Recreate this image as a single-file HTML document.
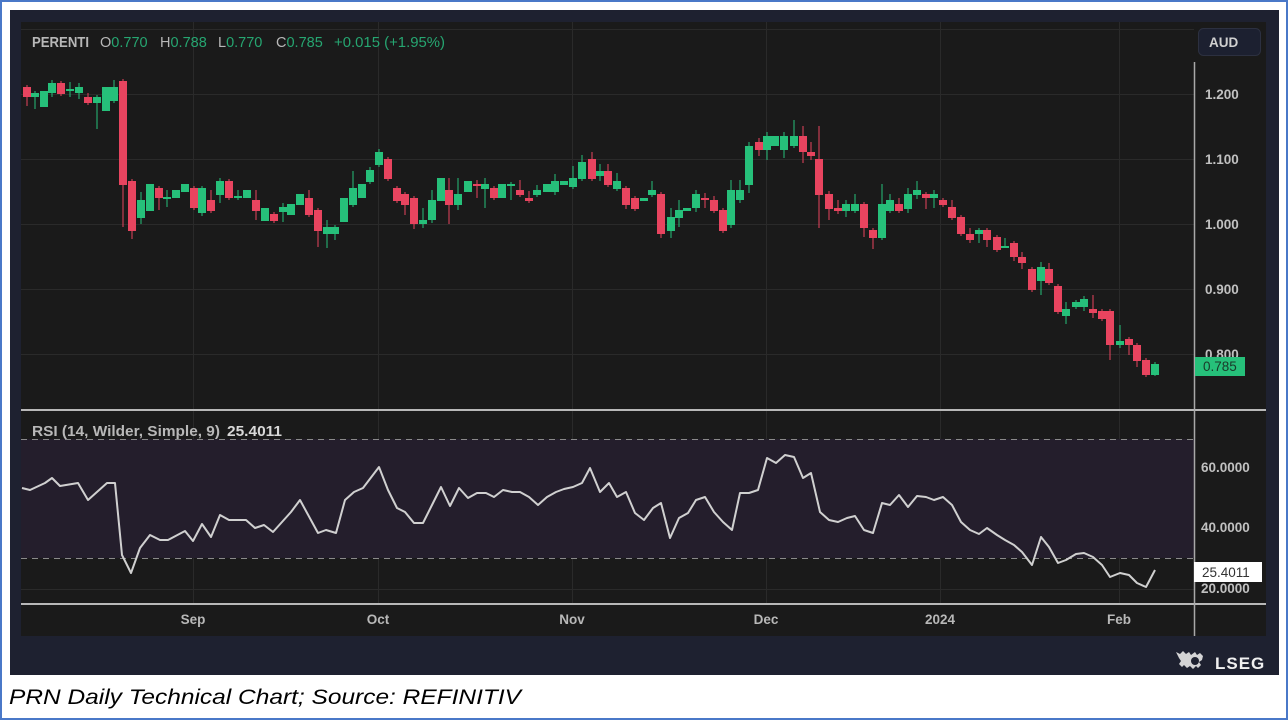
<!DOCTYPE html>
<html><head><meta charset="utf-8"><style>
html,body{margin:0;padding:0;background:#fff;width:1288px;height:720px;overflow:hidden}
svg{display:block}
text{font-family:"Liberation Sans",sans-serif}
</style></head><body>
<svg width="1288" height="720" viewBox="0 0 1288 720" xmlns="http://www.w3.org/2000/svg">
<rect x="0" y="0" width="1288" height="720" fill="#fff"/>
<rect x="1" y="1" width="1286" height="718" fill="none" stroke="#4a78c8" stroke-width="2"/>
<rect x="10" y="10" width="1269" height="665" fill="#1e2130"/>
<rect x="21" y="22" width="1245" height="614" fill="#1a1a1a"/>
<g stroke="#2a2a2a" stroke-width="1">
<line x1="21" y1="29.5" x2="1194" y2="29.5"/>
<line x1="21" y1="94.5" x2="1194" y2="94.5"/><line x1="21" y1="159.5" x2="1194" y2="159.5"/>
<line x1="21" y1="224.5" x2="1194" y2="224.5"/><line x1="21" y1="289.5" x2="1194" y2="289.5"/>
<line x1="21" y1="354.5" x2="1194" y2="354.5"/>
<line x1="21" y1="467.5" x2="1194" y2="467.5"/><line x1="21" y1="527.5" x2="1194" y2="527.5"/><line x1="21" y1="589.5" x2="1194" y2="589.5"/>
<line x1="193.5" y1="22" x2="193.5" y2="603"/><line x1="378.5" y1="22" x2="378.5" y2="603"/>
<line x1="572.5" y1="22" x2="572.5" y2="603"/><line x1="766.5" y1="22" x2="766.5" y2="603"/>
<line x1="940.5" y1="22" x2="940.5" y2="603"/><line x1="1119.5" y1="22" x2="1119.5" y2="603"/>
</g>
<rect x="21" y="439" width="1173" height="119" fill="#241e2c"/>
<g stroke="#8a8a8a" stroke-dasharray="6,5" stroke-width="1">
<line x1="21" y1="439.5" x2="1194" y2="439.5"/><line x1="21" y1="558.5" x2="1194" y2="558.5"/>
</g>
<g stroke="#b8b8b8" stroke-width="2">
<line x1="21" y1="410" x2="1266" y2="410"/>
<line x1="21" y1="604" x2="1266" y2="604"/>
</g>
<line x1="1194.5" y1="62" x2="1194.5" y2="636" stroke="#a8a8a8" stroke-width="1.5"/>
<g font-size="14.5">
<text x="32" y="47" fill="#b8b8b8" font-weight="bold" textLength="57" lengthAdjust="spacingAndGlyphs">PERENTI</text>
<text x="100" y="47" fill="#b8b8b8">O<tspan fill="#26a671">0.770</tspan></text>
<text x="160" y="47" fill="#b8b8b8">H<tspan fill="#26a671">0.788</tspan></text>
<text x="218" y="47" fill="#b8b8b8">L<tspan fill="#26a671">0.770</tspan></text>
<text x="276" y="47" fill="#b8b8b8">C<tspan fill="#26a671">0.785</tspan></text>
<text x="334" y="47" fill="#26a671" textLength="111" lengthAdjust="spacingAndGlyphs">+0.015 (+1.95%)</text>
</g>
<rect x="1198.5" y="28.5" width="62" height="27" rx="5" fill="#1c2030" stroke="#2c3040"/>
<text x="1209" y="47" font-size="13.5" font-weight="bold" fill="#d0d0d0">AUD</text>
<g font-size="13.5" fill="#c0c0c0" font-weight="bold">
<text x="1205" y="99">1.200</text><text x="1205" y="164">1.100</text>
<text x="1205" y="229">1.000</text><text x="1205" y="294">0.900</text><text x="1205" y="359">0.800</text>
<text x="1201" y="472">60.0000</text><text x="1201" y="532">40.0000</text><text x="1201" y="593">20.0000</text>
</g>
<rect x="1195" y="357" width="50" height="19" fill="#26c07a"/>
<text x="1203" y="371" font-size="13.5" fill="#1a3a2a">0.785</text>
<rect x="1194" y="562" width="68" height="20" fill="#fff"/>
<text x="1202" y="577" font-size="13.5" fill="#333">25.4011</text>
<text x="32" y="436" font-size="14.5" fill="#b8b8b8" font-weight="bold" textLength="188" lengthAdjust="spacingAndGlyphs">RSI (14, Wilder, Simple, 9)</text>
<text x="227" y="436" font-size="14.5" font-weight="bold" fill="#d8d8d8" textLength="55" lengthAdjust="spacingAndGlyphs">25.4011</text>
<g font-size="13.5" fill="#b8b8b8" font-weight="bold" text-anchor="middle">
<text x="193" y="624">Sep</text><text x="378" y="624">Oct</text><text x="572" y="624">Nov</text>
<text x="766" y="624">Dec</text><text x="940" y="624">2024</text><text x="1119" y="624">Feb</text>
</g>
<polyline fill="none" stroke="#d0d0d0" stroke-width="2" stroke-linejoin="round" points="22,488 30,490 45,483 52,478 60,486 78,483 88,500 107,483 115,483 122,555 131,573 140,548 150,535 160,540 168,540 185,531 193,541 202,524 211,537 220,515 229,520 246,520 255,528 264,525 273,532 282,522 291,512 300,500 318,533 326,530 336,533 345,500 354,492 363,488 379,467 388,490 397,508 405,512 414,523 423,523 432,505 441,487 450,506 459,488 468,498 477,493 486,493 494,497 503,490 512,492 520,492 529,497 538,505 547,497 556,492 564,489 573,487 582,483 590,468 600,492 609,483 617,497 626,492 635,513 644,520 653,508 661,503 670,538 679,518 688,513 696,500 705,497 714,512 723,522 732,530 740,493 749,493 758,490 767,458 776,463 785,455 794,457 803,478 811,473 820,512 829,520 838,522 847,518 855,516 864,530 873,533 882,503 890,505 899,495 908,507 917,496 926,497 934,500 943,497 952,505 961,522 970,530 979,534 987,528 997,535 1005,540 1014,545 1022,552 1032,565 1041,537 1049,547 1058,563 1066,560 1076,554 1084,553 1093,557 1102,565 1110,577 1120,573 1129,575 1137,583 1146,587 1155,570"/>
<g fill="#26c07a" stroke="#26c07a">
<g stroke-width="1">
<line x1="35" y1="91" x2="35" y2="109"/><line x1="52" y1="80" x2="52" y2="97"/><line x1="70" y1="82" x2="70" y2="97"/><line x1="79" y1="83" x2="79" y2="99"/><line x1="97" y1="95" x2="97" y2="129"/><line x1="114" y1="80" x2="114" y2="103"/>
<line x1="141" y1="192" x2="141" y2="224"/><line x1="167" y1="190" x2="167" y2="207"/><line x1="202" y1="186" x2="202" y2="216"/><line x1="220" y1="178" x2="220" y2="203"/><line x1="238" y1="190" x2="238" y2="200"/><line x1="283" y1="203" x2="283" y2="222"/><line x1="327" y1="220" x2="327" y2="248"/><line x1="335" y1="225" x2="335" y2="240"/><line x1="353" y1="171" x2="353" y2="207"/><line x1="370" y1="167" x2="370" y2="184"/><line x1="379" y1="149" x2="379" y2="167"/>
<line x1="423" y1="208" x2="423" y2="228"/><line x1="432" y1="190" x2="432" y2="223"/><line x1="458" y1="178" x2="458" y2="210"/><line x1="485" y1="178" x2="485" y2="208"/><line x1="511" y1="182" x2="511" y2="200"/><line x1="537" y1="185" x2="537" y2="197"/><line x1="555" y1="174" x2="555" y2="195"/><line x1="573" y1="166" x2="573" y2="189"/><line x1="582" y1="155" x2="582" y2="181"/><line x1="600" y1="164" x2="600" y2="181"/><line x1="617" y1="173" x2="617" y2="191"/><line x1="652" y1="181" x2="652" y2="197"/><line x1="671" y1="208" x2="671" y2="238"/><line x1="679" y1="200" x2="679" y2="227"/><line x1="696" y1="190" x2="696" y2="212"/><line x1="731" y1="180" x2="731" y2="228"/><line x1="740" y1="180" x2="740" y2="203"/><line x1="749" y1="142" x2="749" y2="193"/><line x1="767" y1="132" x2="767" y2="160"/><line x1="784" y1="132" x2="784" y2="158"/><line x1="794" y1="120" x2="794" y2="148"/>
<line x1="846" y1="200" x2="846" y2="217"/><line x1="855" y1="194" x2="855" y2="213"/><line x1="882" y1="184" x2="882" y2="240"/><line x1="890" y1="194" x2="890" y2="213"/><line x1="908" y1="188" x2="908" y2="213"/><line x1="917" y1="181" x2="917" y2="199"/><line x1="934" y1="190" x2="934" y2="208"/><line x1="979" y1="228" x2="979" y2="243"/><line x1="1005" y1="238" x2="1005" y2="248"/><line x1="1041" y1="262" x2="1041" y2="295"/><line x1="1066" y1="302" x2="1066" y2="324"/><line x1="1076" y1="300" x2="1076" y2="309"/><line x1="1084" y1="296" x2="1084" y2="311"/><line x1="1120" y1="325" x2="1120" y2="348"/><line x1="1155" y1="362" x2="1155" y2="376"/>
</g>
<g stroke="none">
<rect x="31" y="93" width="8" height="4"/><rect x="40" y="91" width="8" height="16"/><rect x="48" y="83" width="8" height="10"/><rect x="66" y="89" width="8" height="2"/><rect x="75" y="87" width="8" height="6"/><rect x="93" y="97" width="8" height="6"/><rect x="102" y="87" width="8" height="24"/><rect x="110" y="87" width="8" height="14"/>
<rect x="137" y="200" width="8" height="18"/><rect x="146" y="184" width="8" height="27"/><rect x="163" y="197" width="8" height="2"/><rect x="172" y="190" width="8" height="8"/><rect x="181" y="184" width="8" height="8"/><rect x="198" y="188" width="8" height="25"/><rect x="216" y="181" width="8" height="14"/><rect x="234" y="196" width="8" height="2"/><rect x="243" y="190" width="8" height="8"/><rect x="261" y="208" width="8" height="13"/><rect x="279" y="207" width="8" height="5"/><rect x="287" y="204" width="8" height="11"/><rect x="296" y="194" width="8" height="11"/><rect x="323" y="227" width="8" height="7"/><rect x="331" y="227" width="8" height="7"/><rect x="340" y="198" width="8" height="24"/><rect x="349" y="188" width="8" height="17"/><rect x="358" y="184" width="8" height="14"/><rect x="366" y="170" width="8" height="12"/><rect x="375" y="152" width="8" height="13"/>
<rect x="419" y="220" width="8" height="4"/><rect x="428" y="200" width="8" height="20"/><rect x="437" y="178" width="8" height="23"/><rect x="454" y="194" width="8" height="11"/><rect x="464" y="181" width="8" height="11"/><rect x="481" y="184" width="8" height="5"/><rect x="498" y="184" width="8" height="14"/><rect x="507" y="184" width="8" height="2"/><rect x="533" y="190" width="8" height="5"/><rect x="543" y="184" width="8" height="8"/><rect x="551" y="181" width="8" height="11"/><rect x="560" y="181" width="8" height="4"/><rect x="569" y="178" width="8" height="9"/><rect x="578" y="162" width="8" height="17"/><rect x="596" y="171" width="8" height="5"/><rect x="613" y="181" width="8" height="8"/><rect x="640" y="198" width="8" height="3"/><rect x="648" y="190" width="8" height="5"/><rect x="667" y="217" width="8" height="14"/><rect x="675" y="210" width="8" height="8"/><rect x="683" y="208" width="8" height="3"/><rect x="692" y="194" width="8" height="14"/><rect x="727" y="190" width="8" height="35"/><rect x="736" y="190" width="8" height="10"/><rect x="745" y="146" width="8" height="39"/><rect x="763" y="136" width="8" height="14"/><rect x="771" y="136" width="8" height="10"/><rect x="780" y="136" width="8" height="14"/><rect x="790" y="136" width="8" height="10"/>
<rect x="842" y="204" width="8" height="7"/><rect x="851" y="204" width="8" height="7"/><rect x="878" y="204" width="8" height="34"/><rect x="886" y="200" width="8" height="11"/><rect x="904" y="194" width="8" height="15"/><rect x="913" y="190" width="8" height="5"/><rect x="930" y="194" width="8" height="4"/><rect x="975" y="230" width="8" height="4"/><rect x="1001" y="246" width="8" height="2"/><rect x="1037" y="267" width="8" height="14"/><rect x="1062" y="309" width="8" height="7"/><rect x="1072" y="302" width="8" height="5"/><rect x="1080" y="299" width="8" height="8"/><rect x="1116" y="341" width="8" height="4"/><rect x="1151" y="364" width="8" height="11"/>
</g></g>
<g fill="#e8445f" stroke="#e8445f">
<g stroke-width="1">
<line x1="27" y1="85" x2="27" y2="106"/><line x1="61" y1="81" x2="61" y2="96"/><line x1="88" y1="93" x2="88" y2="105"/><line x1="123" y1="79" x2="123" y2="227"/><line x1="132" y1="179" x2="132" y2="239"/><line x1="159" y1="186" x2="159" y2="210"/><line x1="194" y1="186" x2="194" y2="210"/><line x1="211" y1="190" x2="211" y2="213"/><line x1="229" y1="179" x2="229" y2="200"/><line x1="256" y1="190" x2="256" y2="220"/><line x1="274" y1="212" x2="274" y2="223"/><line x1="309" y1="190" x2="309" y2="217"/><line x1="318" y1="208" x2="318" y2="247"/><line x1="388" y1="157" x2="388" y2="181"/><line x1="397" y1="186" x2="397" y2="203"/><line x1="405" y1="192" x2="405" y2="215"/><line x1="414" y1="196" x2="414" y2="229"/>
<line x1="449" y1="178" x2="449" y2="224"/><line x1="477" y1="180" x2="477" y2="198"/><line x1="494" y1="186" x2="494" y2="200"/><line x1="520" y1="180" x2="520" y2="197"/><line x1="529" y1="191" x2="529" y2="203"/><line x1="592" y1="152" x2="592" y2="181"/><line x1="608" y1="164" x2="608" y2="187"/><line x1="626" y1="186" x2="626" y2="209"/><line x1="635" y1="196" x2="635" y2="211"/><line x1="661" y1="192" x2="661" y2="238"/><line x1="705" y1="193" x2="705" y2="208"/><line x1="714" y1="196" x2="714" y2="213"/><line x1="723" y1="208" x2="723" y2="233"/><line x1="759" y1="138" x2="759" y2="156"/>
<line x1="803" y1="126" x2="803" y2="163"/><line x1="811" y1="142" x2="811" y2="160"/><line x1="819" y1="126" x2="819" y2="228"/><line x1="829" y1="191" x2="829" y2="220"/><line x1="838" y1="200" x2="838" y2="214"/><line x1="864" y1="202" x2="864" y2="237"/><line x1="873" y1="228" x2="873" y2="249"/><line x1="899" y1="198" x2="899" y2="213"/><line x1="926" y1="192" x2="926" y2="209"/><line x1="943" y1="198" x2="943" y2="207"/><line x1="952" y1="200" x2="952" y2="220"/><line x1="961" y1="215" x2="961" y2="236"/><line x1="970" y1="228" x2="970" y2="243"/><line x1="987" y1="228" x2="987" y2="247"/><line x1="997" y1="235" x2="997" y2="252"/><line x1="1014" y1="241" x2="1014" y2="261"/><line x1="1022" y1="252" x2="1022" y2="269"/><line x1="1032" y1="267" x2="1032" y2="292"/><line x1="1049" y1="263" x2="1049" y2="285"/><line x1="1058" y1="284" x2="1058" y2="314"/><line x1="1093" y1="295" x2="1093" y2="318"/><line x1="1102" y1="309" x2="1102" y2="321"/><line x1="1110" y1="309" x2="1110" y2="360"/><line x1="1129" y1="337" x2="1129" y2="355"/><line x1="1137" y1="343" x2="1137" y2="367"/><line x1="1146" y1="358" x2="1146" y2="377"/>
</g>
<g stroke="none">
<rect x="23" y="87" width="8" height="10"/><rect x="57" y="83" width="8" height="11"/><rect x="84" y="97" width="8" height="6"/><rect x="119" y="81" width="8" height="104"/><rect x="128" y="181" width="8" height="50"/><rect x="155" y="188" width="8" height="10"/><rect x="190" y="188" width="8" height="20"/><rect x="207" y="200" width="8" height="11"/><rect x="225" y="181" width="8" height="17"/><rect x="252" y="200" width="8" height="11"/><rect x="270" y="214" width="8" height="7"/><rect x="305" y="198" width="8" height="17"/><rect x="314" y="210" width="8" height="21"/><rect x="384" y="159" width="8" height="20"/><rect x="393" y="188" width="8" height="13"/><rect x="401" y="194" width="8" height="11"/><rect x="410" y="198" width="8" height="26"/>
<rect x="445" y="190" width="8" height="15"/><rect x="473" y="184" width="8" height="2"/><rect x="490" y="188" width="8" height="10"/><rect x="516" y="190" width="8" height="5"/><rect x="525" y="198" width="8" height="3"/><rect x="588" y="159" width="8" height="20"/><rect x="604" y="171" width="8" height="14"/><rect x="622" y="188" width="8" height="17"/><rect x="631" y="198" width="8" height="11"/><rect x="657" y="194" width="8" height="40"/><rect x="701" y="198" width="8" height="2"/><rect x="710" y="200" width="8" height="11"/><rect x="719" y="210" width="8" height="21"/><rect x="755" y="142" width="8" height="8"/>
<rect x="799" y="136" width="8" height="16"/><rect x="807" y="152" width="8" height="4"/><rect x="815" y="159" width="8" height="36"/><rect x="825" y="194" width="8" height="15"/><rect x="834" y="208" width="8" height="3"/><rect x="860" y="204" width="8" height="24"/><rect x="869" y="230" width="8" height="8"/><rect x="895" y="204" width="8" height="7"/><rect x="922" y="194" width="8" height="4"/><rect x="939" y="200" width="8" height="5"/><rect x="948" y="207" width="8" height="11"/><rect x="957" y="217" width="8" height="17"/><rect x="966" y="234" width="8" height="6"/><rect x="983" y="230" width="8" height="10"/><rect x="993" y="237" width="8" height="13"/><rect x="1010" y="243" width="8" height="14"/><rect x="1018" y="257" width="8" height="6"/><rect x="1028" y="269" width="8" height="21"/><rect x="1045" y="269" width="8" height="14"/><rect x="1054" y="286" width="8" height="26"/><rect x="1089" y="309" width="8" height="4"/><rect x="1098" y="311" width="8" height="8"/><rect x="1106" y="311" width="8" height="34"/><rect x="1125" y="339" width="8" height="6"/><rect x="1133" y="345" width="8" height="16"/><rect x="1142" y="360" width="8" height="15"/>
</g></g>
<g fill="#e8e8e8">
<path d="M1176 652 l4 2 3-3 3 3 3-2 2 3 4-3 2 3 3-2 3 3 -1 4 -3 2 2 3 -3 3 -2 -2 -3 3 -3 -3 -3 2 -3 -3 -2 2 -3 -3 2 -3 -2 -3 z" opacity="0.9"/>
<circle cx="1195" cy="661" r="4" fill="#1e2130"/>
</g>
<text x="1215" y="669" font-size="17" font-weight="bold" fill="#f0f0f0" letter-spacing="1">LSEG</text>
<text x="9" y="704" font-size="21" font-style="italic" fill="#000" textLength="512" lengthAdjust="spacingAndGlyphs">PRN Daily Technical Chart; Source: REFINITIV</text>
</svg>
</body></html>
